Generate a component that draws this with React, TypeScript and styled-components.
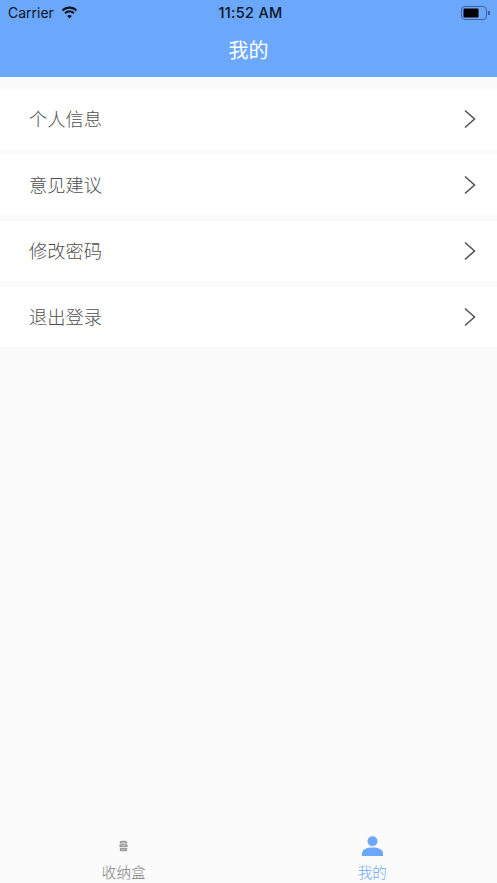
import React, { ReactElement } from "react";
import styled, { createGlobalStyle } from "styled-components";

const CJK = `"Noto Sans CJK SC", "Liberation Sans", sans-serif`;

const GlobalStyle = createGlobalStyle`
  html, body {
    margin: 0;
    padding: 0;
    background: #fbfbfb;
  }
`;

const Page = styled.div`
  width: 497px;
  height: 883px;
  display: flex;
  flex-direction: column;
  overflow: hidden;
  background: #fbfbfb;
  font-family: ${CJK};
`;

const Header = styled.header`
  height: 77px;
  flex: none;
  display: flex;
  flex-direction: column;
  background: #6ba7fb;
`;

const StatusBar = styled.div`
  height: 25px;
  padding: 0 7px 0 8px;
  display: grid;
  grid-template-columns: 1fr auto 1fr;
  align-items: center;
  color: #0d1522;
  font-family: Inter, "Liberation Sans", sans-serif;
`;

const StatusLeft = styled.div`
  display: flex;
  align-items: center;
  gap: 7px;
  font-size: 14px;
`;

const Clock = styled.div`
  padding-left: 3px;
  font-size: 14.5px;
  font-weight: 500;
  letter-spacing: 0.3px;
`;

const StatusRight = styled.div`
  display: flex;
  justify-content: flex-end;
`;

const Title = styled.h1`
  flex: 1;
  margin: 0;
  padding-bottom: 4px;
  display: flex;
  align-items: center;
  justify-content: center;
  color: #fff;
  font-size: 20px;
  font-weight: 400;
`;

const Menu = styled.main`
  flex: 1;
  padding-top: 12px;
  display: flex;
  flex-direction: column;
  gap: 6px;
`;

const Row = styled.div`
  height: 60px;
  padding: 0 20px 0 29px;
  display: flex;
  align-items: center;
  justify-content: space-between;
  background: #fff;
  color: #4f4f4f;
  font-size: 18.25px;
  font-weight: 300;
`;

const RowLabel = styled.span`
  padding-bottom: 2px;
`;

const TabBar = styled.nav`
  height: 55px;
  flex: none;
  display: grid;
  grid-template-columns: 1fr 1fr;
`;

const Tab = styled.div<{ $active?: boolean }>`
  display: flex;
  flex-direction: column;
  align-items: center;
  justify-content: flex-end;
  padding: 0 1px 1px 0;
  color: ${(p) => (p.$active ? "#6ba7fb" : "#7d7d7d")};
  font-size: 14.6px;
  font-weight: 300;
  line-height: 20px;
`;

const TabIcon = styled.div`
  height: 30px;
  padding-bottom: 3px;
  box-sizing: border-box;
  display: flex;
  align-items: center;
  justify-content: center;
`;

const Chevron = (): ReactElement => (
  <svg width="14" height="20" viewBox="0 0 14 20" fill="none">
    <path d="M2 1.5 L11.5 10 L2 18.5" stroke="#555" strokeWidth="1.6" />
  </svg>
);

const Wifi = (): ReactElement => (
  <svg width="17" height="13" viewBox="0 0 17 13" fill="#0d1522">
    <path d="M8.5 2.8c2.4 0 4.6.9 6.3 2.5l1.4-1.5C14.1 1.8 11.4.6 8.5.6S2.9 1.8.8 3.8l1.4 1.5c1.7-1.6 3.9-2.5 6.3-2.5z" />
    <path d="M8.5 6.4c1.4 0 2.7.5 3.7 1.5l1.4-1.5c-1.4-1.3-3.2-2.1-5.1-2.1s-3.7.8-5.1 2.1l1.4 1.5c1-1 2.3-1.5 3.7-1.5z" />
    <path d="M8.5 12.6l2.4-2.6c-.6-.6-1.5-1-2.4-1s-1.8.4-2.4 1z" />
  </svg>
);

const Battery = (): ReactElement => (
  <svg width="29" height="14" viewBox="0 0 29 14" fill="none">
    <rect x="0.5" y="0.5" width="25" height="13" rx="3.5" stroke="#3d6198" />
    <rect x="2.5" y="2.5" width="15" height="9" rx="1" fill="#000" />
    <path d="M27 5 h1 a1 1 0 0 1 0 4 h-1z" fill="#3d6198" />
  </svg>
);

const BoxIcon = (): ReactElement => (
  <svg width="9" height="12" viewBox="0 0 11 14" fill="#9a9a9a">
    <path d="M1 2.5 Q1 .5 3 .5 h5 Q10 .5 10 2.5 V4 H1z" />
    <rect x="0.5" y="5" width="10" height="3.4" rx="0.8" />
    <path d="M1 9.4 h9 V11.5 Q10 13.5 8 13.5 H3 Q1 13.5 1 11.5z" />
    <path d="M3.5 2.4 h4 M3.5 6.7 h4 M3.5 11.2 h4" stroke="#d8d8d8" strokeWidth="0.8" />
  </svg>
);

const PersonIcon = (): ReactElement => (
  <svg width="21" height="20" viewBox="0 0 21 20" fill="#6ba7fb">
    <circle cx="10.5" cy="5.2" r="5" />
    <path d="M0 20 V17 C0 13.5 5 11.5 10.5 11.5 S21 13.5 21 17 V20z" />
  </svg>
);

const items = ["个人信息", "意见建议", "修改密码", "退出登录"];

const App = (): ReactElement => {
  return (
    <Page>
      <GlobalStyle />
      <Header>
        <StatusBar>
          <StatusLeft>
            Carrier
            <Wifi />
          </StatusLeft>
          <Clock>11:52 AM</Clock>
          <StatusRight>
            <Battery />
          </StatusRight>
        </StatusBar>
        <Title>我的</Title>
      </Header>
      <Menu>
        {items.map((item) => (
          <Row key={item}>
            <RowLabel>{item}</RowLabel>
            <Chevron />
          </Row>
        ))}
      </Menu>
      <TabBar>
        <Tab>
          <TabIcon>
            <BoxIcon />
          </TabIcon>
          收纳盒
        </Tab>
        <Tab $active>
          <TabIcon>
            <PersonIcon />
          </TabIcon>
          我的
        </Tab>
      </TabBar>
    </Page>
  );
};

export default App;
